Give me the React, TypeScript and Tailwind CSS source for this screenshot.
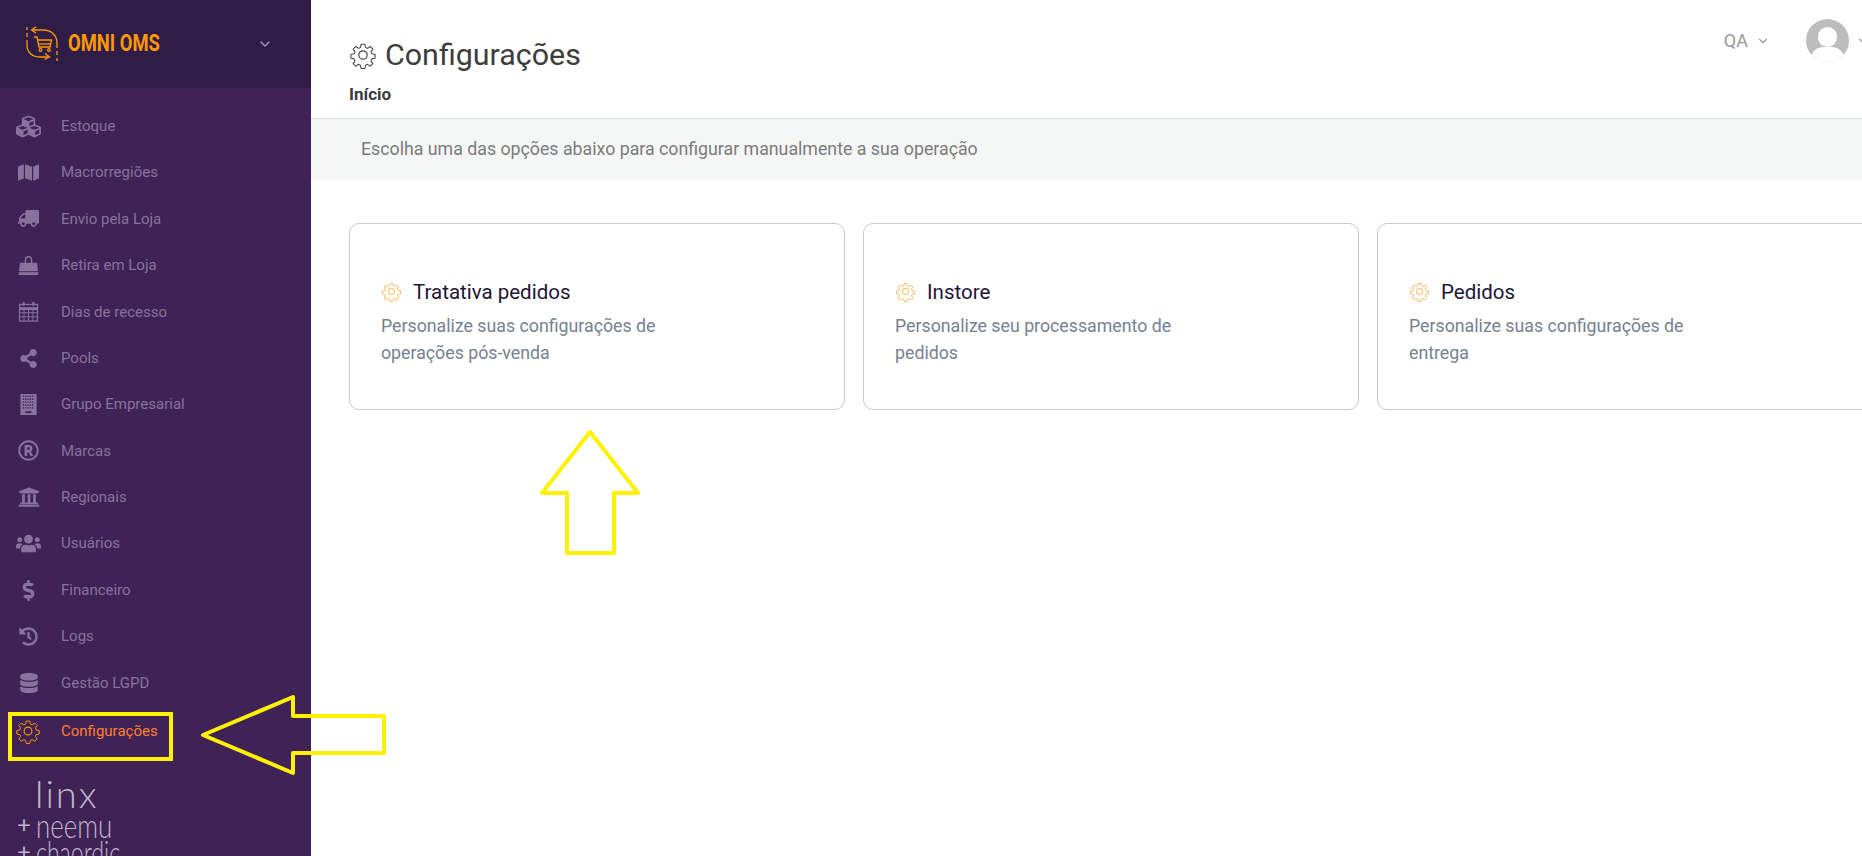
import { ChevronDown } from "lucide-react";
import {
  FaCubes,
  FaMap,
  FaTruck,
  FaShareAlt,
  FaRegRegistered,
  FaUniversity,
  FaUsers,
  FaDollarSign,
  FaHistory,
  FaDatabase,
} from "react-icons/fa";

const BagIcon = ({ className }: { className?: string }) => (
  <svg viewBox="0 0 22 22" fill="currentColor" className={className}>
    <path d="M2 8h5V5a4 4 0 018 0v3h5l1 9H1zM8.5 8h5V5a2.5 2.5 0 00-5 0z" fillRule="evenodd" />
    <path d="M.8 18h20.4v3H.8z" />
  </svg>
);

const CalendarIcon = ({ className }: { className?: string }) => (
  <svg viewBox="0 0 22 22" fill="none" stroke="currentColor" strokeWidth="1.3" className={className}>
    <rect x="1.6" y="3.6" width="18.8" height="17.4" />
    <path d="M1.6 8h18.8" strokeWidth="3" />
    <path d="M1.6 12.3h18.8M1.6 16.6h18.8M6.3 9v12M11 9v12M15.7 9v12" strokeWidth="1" />
    <path d="M6 1v4M16 1v4" strokeWidth="2.2" />
  </svg>
);

const BuildingIcon = ({ className }: { className?: string }) => (
  <svg viewBox="0 0 22 22" className={className}>
    <path fill="currentColor" d="M2.5 0h17v22h-17z" />
    <path
      stroke="#3f2357"
      strokeWidth="1.4"
      strokeDasharray="1.4 1"
      d="M5 2.5h12M5 5.5h12M5 8.5h12M5 11.5h12M5 14.5h12"
    />
    <path fill="#3f2357" d="M8 18h6v2H8z" />
  </svg>
);

const MirroredTruck = ({ className }: { className?: string }) => (
  <FaTruck className={`-scale-x-100 ${className ?? ""}`} />
);

const menu = [
  { label: "Estoque", icon: FaCubes, size: "text-[25px]" },
  { label: "Macrorregiões", icon: FaMap, size: "text-[21px]" },
  { label: "Envio pela Loja", icon: MirroredTruck, size: "text-[21px]" },
  { label: "Retira em Loja", icon: BagIcon, size: "h-[21px] w-[21px]" },
  { label: "Dias de recesso", icon: CalendarIcon, size: "h-[21px] w-[21px]" },
  { label: "Pools", icon: FaShareAlt, size: "text-[19px]" },
  { label: "Grupo Empresarial", icon: BuildingIcon, size: "h-[21px] w-[21px]" },
  { label: "Marcas", icon: FaRegRegistered, size: "text-[21px]" },
  { label: "Regionais", icon: FaUniversity, size: "text-[22px]" },
  { label: "Usuários", icon: FaUsers, size: "text-[25px]" },
  { label: "Financeiro", icon: FaDollarSign, size: "text-[21px]" },
  { label: "Logs", icon: FaHistory, size: "text-[19px]" },
  { label: "Gestão LGPD", icon: FaDatabase, size: "text-[20px]" },
];

const cards = [
  { title: "Tratativa pedidos", text: "Personalize suas configurações de operações pós-venda" },
  { title: "Instore", text: "Personalize seu processamento de pedidos" },
  { title: "Pedidos", text: "Personalize suas configurações de entrega" },
];

// outline gear with eight rounded teeth
const Gear = ({ className }: { className: string }) => (
  <svg viewBox="0 0 24 24" fill="none" stroke="currentColor" strokeWidth="1" strokeLinejoin="round" className={className}>
    <circle cx="12" cy="12" r="3.6" />
    <path d="M10.2 1.8h3.6l.6 3.1 1.9.8 2.6-1.8 2.5 2.5-1.8 2.6.8 1.9 3.1.6v3.6l-3.1.6-.8 1.9 1.8 2.6-2.5 2.5-2.6-1.8-1.9.8-.6 3.1h-3.6l-.6-3.1-1.9-.8-2.6 1.8-2.5-2.5 1.8-2.6-.8-1.9-3.1-.6v-3.6l3.1-.6.8-1.9-1.8-2.6 2.5-2.5 2.6 1.8 1.9-.8z" transform="translate(1.2 1.2) scale(.9)" />
  </svg>
);

const LogoMark = () => (
  <svg viewBox="0 0 32 36" fill="none" stroke="#ff9900" strokeWidth="1.3" className="h-[36px] w-[32px] shrink-0">
    <path d="M1 1v3M1 7v4M1 14v5" />
    <path d="M1 19c0 8 6 12 13 12h8" />
    <path d="M19 27.500l4.500 3.500-5 2.500" />
    <path d="M31 35v-3M31 29v-4M31 22v-5" />
    <path d="M31 17C31 9 25 4 17 4H6" />
    <path d="M10 .8L5.500 4l4.500 3" />
    <path d="M8 11h3l2 10h11l1.500-7H12" />
    <path d="M12.500 18h12.500" />
    <circle cx="14.500" cy="24" r="1.300" />
    <circle cx="23" cy="24" r="1.300" />
  </svg>
);

export default function App() {
  return (
    <div className="relative flex h-[856px] w-[1862px] overflow-hidden bg-white font-['Roboto',sans-serif]">
      <aside className="flex w-[311px] shrink-0 flex-col overflow-hidden bg-[#3f2357]">
        <div className="flex h-[88px] shrink-0 items-center bg-[#2f1d47] pl-[26px] pr-[38px]">
          <LogoMark />
          <span className="ml-[10px] origin-left scale-x-[.8] text-[23px] font-bold whitespace-nowrap text-[#ff9900]">OMNI OMS</span>
          <ChevronDown className="ml-auto h-[16px] w-[16px] text-[#a99ab8]" />
        </div>
        <nav className="flex flex-col pt-[15px]">
          {menu.map((item) => (
            <div key={item.label} className="flex h-[46.4px] items-center text-[15px] text-[#8a729e]">
              <span className="flex w-[61px] shrink-0 justify-center pr-[4px]">
                <item.icon className={item.size} />
              </span>
              {item.label}
            </div>
          ))}
          <div className="mt-[2px] flex h-[46.4px] items-center text-[15px] text-[#ff7f2a]">
            <span className="flex w-[61px] shrink-0 justify-center pr-[6px]">
              <Gear className="h-[26px] w-[26px] text-[#ff9900]" />
            </span>
            Configurações
          </div>
        </nav>
        <div className="mt-[22px] flex flex-col pl-[17px] font-['Lato',sans-serif] font-light text-[#c2b6cc]">
          <span className="pl-[18px] text-[38px] leading-[34px] tracking-[2px]">linx</span>
          <div className="flex h-[28px] items-center">
            <span className="w-[19px] text-[24px] font-normal">+</span>
            <span className="origin-left scale-x-[.76] text-[34px]">neemu</span>
          </div>
          <div className="flex h-[26px] items-center">
            <span className="w-[19px] text-[24px] font-normal">+</span>
            <span className="origin-left scale-x-[.68] text-[34px]">chaordic</span>
          </div>
        </div>
      </aside>

      <main className="min-w-0 flex-1">
        <header className="flex h-[118px] items-start justify-between pl-[38px]">
          <div className="pt-[36px]">
            <div className="flex items-center gap-[8px] text-[#3d3d3d]">
              <Gear className="h-[28px] w-[28px] text-[#444444]" />
              <h1 className="text-[30.4px] leading-[38px]">Configurações</h1>
            </div>
            <div className="mt-[8px] text-[17px] leading-[24px] font-bold text-[#3a3a3a]">Início</div>
          </div>
          <div className="flex items-center pt-[19px]">
            <span className="text-[18px] text-[#9a9a9a]">QA</span>
            <ChevronDown className="ml-[8px] h-[14px] w-[14px] text-[#9a9a9a]" />
            <div className="relative ml-[36px] h-[43px] w-[43px] overflow-hidden rounded-full bg-[#bdbdbd]">
              <div className="absolute left-[12px] top-[8px] h-[20px] w-[19px] rounded-full bg-white" />
              <div className="absolute left-[5px] top-[28px] h-[24px] w-[33px] rounded-full bg-white" />
            </div>
            <ChevronDown className="-mr-[8px] ml-[7px] h-[14px] w-[14px] shrink-0 text-[#9a9a9a]" />
          </div>
        </header>
        <div className="flex h-[62px] items-center border-t border-[#dddddd] bg-[#f5f7f7] pl-[50px] text-[17.75px] text-[#7b7b7b]">
          Escolha uma das opções abaixo para configurar manualmente a sua operação
        </div>
        <div className="flex gap-[18px] pl-[38px] pt-[43px]">
          {cards.map((card) => (
            <div key={card.title} className="flex h-[187px] w-[496px] shrink-0 flex-col justify-center rounded-[10px] border border-[#c9c9c9] pl-[31px] pt-[11px]">
              <div className="flex items-center gap-[11px]">
                <Gear className="h-[21px] w-[21px] text-[#ffa733]" />
                <span className="text-[20.5px] leading-[28px] text-[#1d1436]">{card.title}</span>
              </div>
              <p className="mt-[7px] w-[300px] text-[17.75px] leading-[27px] text-[#76818f]">{card.text}</p>
            </div>
          ))}
        </div>
      </main>

      {/* yellow annotations drawn over the screenshot */}
      <div className="absolute left-[8px] top-[712px] h-[49px] w-[165px] border-4 border-[#fff200]" />
      <svg viewBox="0 0 1862 856" fill="none" stroke="#fff200" strokeWidth="4" strokeLinejoin="round" className="pointer-events-none absolute left-0 top-0 h-[856px] w-[1862px]">
        <path d="M203 735L293 697V716H384V753H293V773Z" />
        <path d="M590 432L638 493H614V553H567V493H542Z" />
      </svg>
    </div>
  );
}
